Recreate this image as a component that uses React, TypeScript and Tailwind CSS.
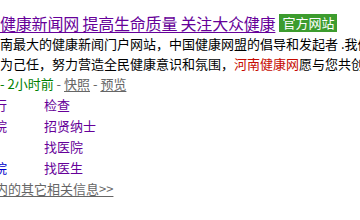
import React from 'react';

const font = { fontFamily: '"Noto Sans CJK SC", "Noto Sans", sans-serif' };

const rows = [
  { left: '行', leftColor: 'text-[#660099]', right: '检查' },
  { left: '院', leftColor: 'text-[#660099]', right: '招贤纳士' },
  { left: '', leftColor: '', right: '找医院' },
  { left: '院', leftColor: 'text-[#0000cc]', right: '找医生' },
];

export default function App() {
  return (
    <div
      className="h-[220px] w-[360px] overflow-hidden bg-white pt-[12px] text-[13px] leading-[20px] text-black"
      style={font}
    >
      <div className="flex h-[22px] items-center whitespace-nowrap">
        <a className="text-[16px] leading-[20px] tracking-[-0.2px] text-[#660099] underline underline-offset-2">
          健康新闻网 提高生命质量 关注大众健康
        </a>
        <span className="ml-[4px] bg-[#3c9c2e] px-[3px] text-[13px] leading-[18px] text-white">
          官方网站
        </span>
      </div>

      <div className="whitespace-nowrap">
        南最大的健康新闻门户网站，中国健康网盟的倡导和发起者 .我们以
      </div>
      <div className="whitespace-nowrap">
        为己任，努力营造全民健康意识和氛围，<span className="text-[#c60a00]">河南健康网</span>愿与您共创
      </div>
      <div className="whitespace-nowrap text-[#666]">
        <span className="text-[#008000]"> - 2小时前</span> -{' '}
        <a className="underline underline-offset-2">快照</a> -{' '}
        <a className="underline underline-offset-2">预览</a>
      </div>

      <div className="mt-[1px] grid grid-cols-[44px_auto]">
        {rows.map((r, i) => (
          <React.Fragment key={i}>
            <div className={`h-[21px] whitespace-nowrap ${r.leftColor}`}>
              {r.left && <span className="-ml-[6px] inline-block">{r.left}</span>}
            </div>
            <div className="h-[21px] whitespace-nowrap text-[#660099]">{r.right}</div>
          </React.Fragment>
        ))}
      </div>

      <div className="whitespace-nowrap text-[#666]">
        <a className="-ml-[5px] inline-block underline underline-offset-2">内的其它相关信息&gt;&gt;</a>
      </div>
    </div>
  );
}
